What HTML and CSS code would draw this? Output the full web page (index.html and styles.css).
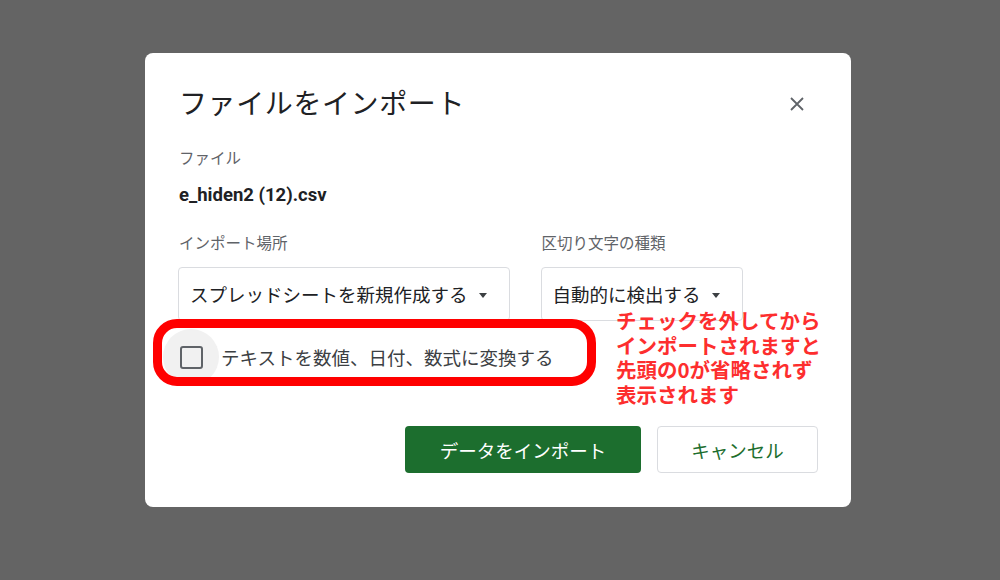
FILE: index.html
```html
<!DOCTYPE html>
<html lang="ja">
<head>
  <meta charset="UTF-8">
  <title>ファイルをインポート</title>
  <link rel="stylesheet" href="styles.css">
</head>
<body>

  <!-- Import dialog -->
  <div class="dialog">
    <div class="dialog-header">
      <h2 class="dialog-title">ファイルをインポート</h2>
      <button class="close-btn" aria-label="閉じる">
        <svg width="14" height="14" viewBox="0 0 14 14">
          <path d="M1 1 L13 13 M13 1 L1 13" stroke="#5f6368" stroke-width="1.8" fill="none"/>
        </svg>
      </button>
    </div>

    <div class="label file-label">ファイル</div>
    <div class="file-name">e_hiden2 (12).csv</div>

    <div class="options">
      <div class="option">
        <div class="label">インポート場所</div>
        <div class="select">
          <span>スプレッドシートを新規作成する</span>
          <span class="arrow"></span>
        </div>
      </div>
      <div class="option">
        <div class="label">区切り文字の種類</div>
        <div class="select">
          <span>自動的に検出する</span>
          <span class="arrow"></span>
        </div>
      </div>
    </div>

    <label class="check-row">
      <span class="check-ripple"><span class="check-box"></span></span>
      <span class="check-text">テキストを数値、日付、数式に変換する</span>
    </label>

    <div class="actions">
      <button class="btn btn-primary">データをインポート</button>
      <button class="btn btn-cancel">キャンセル</button>
    </div>

    <!-- Annotation drawn over the screenshot -->
    <div class="mark-ring"></div>
    <div class="mark-note">
      <div>チェックを外してから</div>
      <div>インポートされますと</div>
      <div>先頭の0が省略されず</div>
      <div>表示されます</div>
    </div>
  </div>

</body>
</html>
```

FILE: styles.css
```css
/* Page */
body {
  margin: 0;
  background-color: #646464;
  font-family: 'Noto Sans CJK JP', 'Noto Sans', sans-serif;
  width: 1000px;
  height: 580px;
  overflow: hidden;
}

.dialog {
  position: relative;
  box-sizing: border-box;
  width: 706px;
  height: 454px;
  margin: 53px 0 0 145px;
  padding: 31px 33px 34px 34px;
  background: #fff;
  border-radius: 8px;
}

.dialog-header {
  display: flex;
  justify-content: space-between;
  align-items: center;
  height: 36px;
}

.dialog-title {
  margin: 0;
  font-size: 28px;
  font-weight: 400;
  letter-spacing: 0.6px;
  line-height: 36px;
  color: #202124;
}

.close-btn {
  width: 40px;
  height: 40px;
  margin: 4px 1px 0 0;
  padding: 0;
  border: none;
  background: none;
  display: flex;
  align-items: center;
  justify-content: center;
}

.label {
  font-size: 15.5px;
  line-height: 24px;
  color: #5f6368;
}

.file-label {
  margin-top: 25px;
}

.file-name {
  margin-top: 14px;
  font-family: Roboto, 'Noto Sans', sans-serif;
  font-weight: 700;
  font-size: 18.5px;
  line-height: 24px;
  color: #202124;
}

.options {
  display: flex;
  gap: 32px;
  margin-top: 23px;
}

.option .label {
  margin-bottom: 13px;
}

.select {
  display: inline-flex;
  align-items: center;
  gap: 11px;
  box-sizing: border-box;
  height: 54px;
  margin-left: -1px;
  padding: 0 22px 0 11px;
  border: 1px solid #dadce0;
  border-radius: 4px;
  font-size: 18.5px;
  color: #202124;
}

.arrow {
  width: 0;
  height: 0;
  margin-top: 2px;
  border-left: 4.5px solid transparent;
  border-right: 4.5px solid transparent;
  border-top: 5px solid #3c4043;
}

.check-row {
  display: flex;
  align-items: center;
  gap: 2px;
  height: 56px;
  margin: 8px 0 0 -16px;
}

.check-ripple {
  display: flex;
  align-items: center;
  justify-content: center;
  width: 56px;
  height: 56px;
  border-radius: 50%;
  background: #f1f1f1;
}

.check-box {
  box-sizing: border-box;
  width: 23px;
  height: 23px;
  border: 2px solid #5f6368;
  border-radius: 3px;
}

.check-text {
  font-size: 18.5px;
  color: #3c4043;
}

.actions {
  display: flex;
  justify-content: flex-end;
  gap: 16px;
  margin-top: 41px;
}

.btn {
  height: 47px;
  box-sizing: border-box;
  border-radius: 4px;
  font-family: 'Noto Sans CJK JP', sans-serif;
  font-size: 18.5px;
}

.btn-primary {
  width: 236px;
  border: none;
  background: #1c6e2e;
  color: #fff;
}

.btn-cancel {
  width: 161px;
  border: 1px solid #dadce0;
  background: #fff;
  color: #1c6e2e;
}

/* Red annotation */
.mark-ring {
  position: absolute;
  left: 8px;
  top: 266px;
  box-sizing: border-box;
  width: 443px;
  height: 67px;
  border: 9px solid #ff0000;
  border-radius: 24px;
}

.mark-note {
  position: absolute;
  left: 471px;
  top: 255px;
  font-size: 20.5px;
  font-weight: 700;
  line-height: 24.5px;
  color: #fd2e2e;
  white-space: nowrap;
}

.mark-note div {
  height: 24.5px;
}
```
